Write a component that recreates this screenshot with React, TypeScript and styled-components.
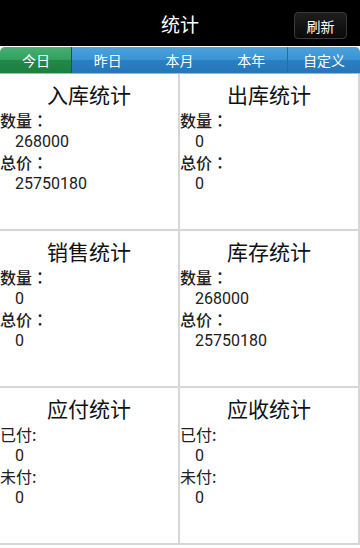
import React from "react";
import styled, { createGlobalStyle } from "styled-components";

const GlobalStyle = createGlobalStyle`
	html, body {
		margin: 0;
		padding: 0;
		background: #ffffff;
	}
	body {
		font-family: Roboto, "Noto Sans CJK SC", sans-serif;
	}
`;

const Page = styled.div`
	width: 360px;
	height: 548px;
	background: #ffffff;
	overflow: hidden;
`;

const Header = styled.div`
	height: 46px;
	background: #000000;
	display: grid;
	grid-template-columns: 1fr auto 1fr;
	align-items: center;
`;

const Title = styled.div`
	grid-column: 2;
	color: #ffffff;
	font-size: 19px;
	font-family: "Noto Sans CJK SC", sans-serif;
	padding-top: 1px;
`;

const RefreshButton = styled.div`
	grid-column: 3;
	justify-self: end;
	margin-right: 13px;
	margin-top: 5px;
	width: 53px;
	height: 27px;
	box-sizing: border-box;
	border: 1px solid #3a3a3a;
	border-radius: 4px;
	background: linear-gradient(#1e1e1e, #0a0a0a);
	color: #ffffff;
	font-size: 14px;
	font-family: "Noto Sans CJK SC", sans-serif;
	display: flex;
	align-items: center;
	justify-content: center;
`;

const TabBar = styled.div`
	display: flex;
	height: 26px;
	margin-top: 1px;
	border-radius: 5px 5px 0 0;
	overflow: hidden;
	border-bottom: 1px solid #9cb8cc;
`;

const Tab = styled.div<{ $active?: boolean; $divider?: boolean }>`
	flex: 1;
	display: flex;
	align-items: center;
	justify-content: center;
	color: #ffffff;
	font-size: 14px;
	font-family: "Noto Sans CJK SC", sans-serif;
	border-left: ${(p) => (p.$divider ? "1px solid #2a6a9c" : "none")};
	background: ${(p) =>
		p.$active
			? "linear-gradient(#45b071 0%, #34a060 48%, #22884a 52%, #1d7e42 100%)"
			: "linear-gradient(#4aa3de 0%, #3a94d2 48%, #2a7fc2 52%, #2676b8 100%)"};
	box-shadow: ${(p) => (p.$active ? "inset -1px 0 0 #1a5a34" : "none")};
`;

const Grid = styled.div`
	display: grid;
	grid-template-columns: 180px 180px;
`;

const Cell = styled.div`
	height: 157px;
	box-sizing: border-box;
	border-right: 2px solid #d6d6d6;
	border-bottom: 2px solid #d6d6d6;
	color: #1a1a1a;
`;

const CellTitle = styled.div`
	padding-top: 7px;
	font-size: 21px;
	line-height: 26px;
	text-align: center;
	font-family: "Noto Sans CJK SC", sans-serif;
	color: #111111;
	margin-bottom: 3px;
`;

const Label = styled.div<{ $strong?: boolean }>`
	font-size: 16px;
	line-height: 21px;
	font-family: "Noto Sans CJK SC", sans-serif;
	font-weight: ${(p) => (p.$strong ? 500 : 400)};
	color: #202020;
`;

const Colon = styled.span`
	font-family: "Noto Sans CJK TC", sans-serif;
`;

const Value = styled.div`
	padding-left: 15px;
	font-size: 16px;
	line-height: 21px;
	font-family: Roboto, "Noto Sans CJK SC", sans-serif;
	color: #202020;
`;

type Stat = {
	title: string;
	labels: [string, string];
	colon: string;
	values: [string, string];
	strong?: boolean;
};

const stats: Stat[] = [
	{ title: "入库统计", labels: ["数量", "总价"], colon: "：", values: ["268000", "25750180"], strong: true },
	{ title: "出库统计", labels: ["数量", "总价"], colon: "：", values: ["0", "0"], strong: true },
	{ title: "销售统计", labels: ["数量", "总价"], colon: "：", values: ["0", "0"], strong: true },
	{ title: "库存统计", labels: ["数量", "总价"], colon: "：", values: ["268000", "25750180"], strong: true },
	{ title: "应付统计", labels: ["已付", "未付"], colon: ":", values: ["0", "0"] },
	{ title: "应收统计", labels: ["已付", "未付"], colon: ":", values: ["0", "0"] },
];

const tabs = ["今日", "昨日", "本月", "本年", "自定义"];

const App = () => {
	return (
		<Page>
			<GlobalStyle />
			<Header>
				<Title>统计</Title>
				<RefreshButton>刷新</RefreshButton>
			</Header>
			<TabBar>
				{tabs.map((t, i) => (
					<Tab key={t} $active={i === 0} $divider={i === 4}>
						{t}
					</Tab>
				))}
			</TabBar>
			<Grid>
				{stats.map((s) => (
					<Cell key={s.title}>
						<CellTitle>{s.title}</CellTitle>
						<Label $strong={s.strong}>
							{s.labels[0]}
							<Colon>{s.colon}</Colon>
						</Label>
						<Value>{s.values[0]}</Value>
						<Label $strong={s.strong}>
							{s.labels[1]}
							<Colon>{s.colon}</Colon>
						</Label>
						<Value>{s.values[1]}</Value>
					</Cell>
				))}
			</Grid>
		</Page>
	);
};

export default App;
